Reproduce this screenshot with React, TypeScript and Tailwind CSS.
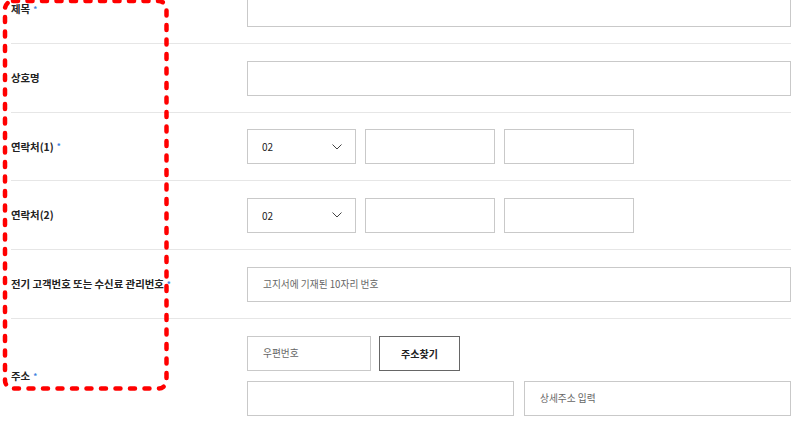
import React from 'react';

const font = { fontFamily: '"Noto Sans CJK KR", "Noto Sans", sans-serif' };

function Label({ text, required }: { text: string; required?: boolean }) {
  return (
    <div className="w-[236px] shrink-0 flex items-center text-[10.4px] font-bold text-[#222]">
      <span>{text}</span>
      {required && <span className="ml-[3px] text-[8px] font-bold text-[#3d7fe0] leading-none">*</span>}
    </div>
  );
}

function Field({ placeholder, className = '' }: { placeholder?: string; className?: string }) {
  return (
    <div
      className={`h-[35px] border border-[#c9c9c9] bg-white flex items-center pl-[15px] text-[9.7px] text-[#666] ${className}`}
    >
      {placeholder}
    </div>
  );
}

function PhoneSelect() {
  return (
    <div className="w-[109px] h-[35px] border border-[#c9c9c9] flex items-center justify-between pl-[14px] pr-[13px] text-[10px] text-[#222]">
      <span>02</span>
      <svg width="10" height="6" viewBox="0 0 10 6" fill="none">
        <polyline points="0.5,0.5 5,5 9.5,0.5" stroke="#444" strokeWidth="1" />
      </svg>
    </div>
  );
}

function Row({ children, className = '' }: { children: React.ReactNode; className?: string }) {
  return <div className={`flex border-b border-[#e6e6e6] ${className}`}>{children}</div>;
}

export default function App() {
  return (
    <div className="relative w-[802px] h-[430px] overflow-hidden bg-white" style={font}>
      <div className="-mt-[25px] pl-[11px] pr-[11px]">
        <Row className="h-[69px] items-center">
          <Label text="제목" required />
          <Field className="flex-1" />
        </Row>
        <Row className="h-[69px] items-center">
          <Label text="상호명" />
          <Field className="flex-1" />
        </Row>
        <Row className="h-[68px] items-center">
          <Label text="연락처(1)" required />
          <div className="flex gap-[9px]">
            <PhoneSelect />
            <Field className="w-[130px]" />
            <Field className="w-[130px]" />
          </div>
        </Row>
        <Row className="h-[69px] items-center">
          <Label text="연락처(2)" />
          <div className="flex gap-[9px]">
            <PhoneSelect />
            <Field className="w-[130px]" />
            <Field className="w-[130px]" />
          </div>
        </Row>
        <Row className="h-[69px] items-center">
          <Label text="전기 고객번호 또는 수신료 관리번호" required />
          <Field className="flex-1" placeholder="고지서에 기재된 10자리 번호" />
        </Row>
        <Row className="items-stretch">
          <Label text="주소" required />
          <div className="flex-1 flex flex-col gap-[10px] pt-[17px] pb-[17px]">
            <div className="flex gap-[8px]">
              <Field className="w-[124px]" placeholder="우편번호" />
              <button className="w-[81px] h-[35px] border border-[#666] bg-white text-[10px] font-bold text-[#222]">
                주소찾기
              </button>
            </div>
            <div className="grid grid-cols-2 gap-[10px]">
              <Field />
              <Field placeholder="상세주소 입력" />
            </div>
          </div>
        </Row>
      </div>

      {/* annotation */}
      <svg className="absolute left-0 top-0 pointer-events-none" width="802" height="430">
        <rect
          x="5"
          y="1"
          width="161.5"
          height="387.5"
          rx="8"
          fill="none"
          stroke="#ff0000"
          strokeWidth="4.5"
          strokeDasharray="5 9.5"
          strokeLinecap="round"
        />
      </svg>
    </div>
  );
}
